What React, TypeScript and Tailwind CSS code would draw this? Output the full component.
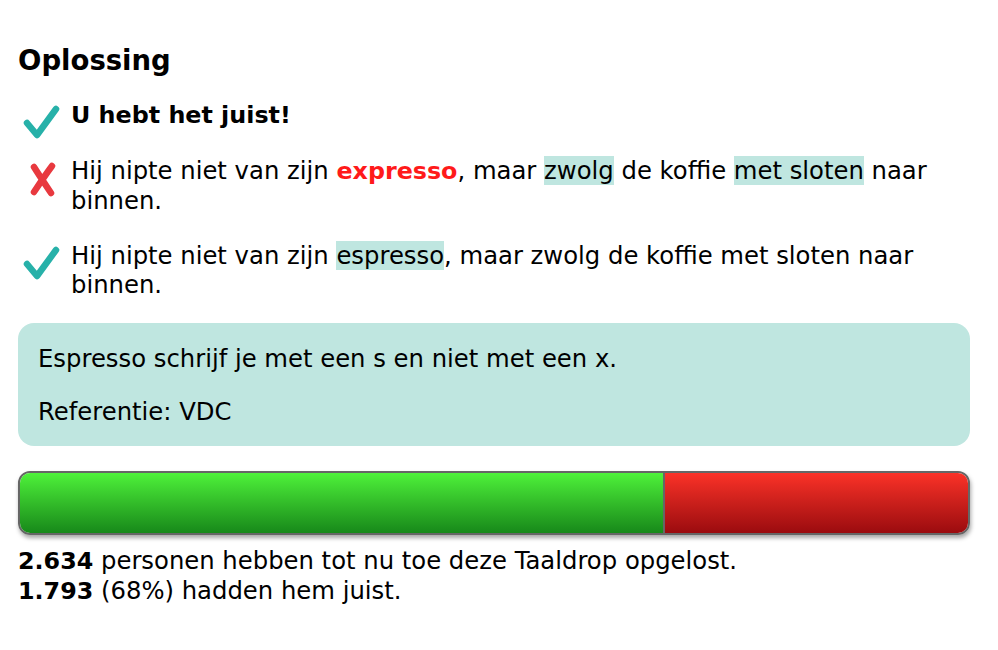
import React from "react";

function Check() {
  return (
    <svg width="40" height="36" viewBox="0 0 40 36" className="shrink-0">
      <path
        d="M5 19 L15 31 L34 5"
        fill="none"
        stroke="#27b1a9"
        strokeWidth="6.5"
        strokeLinecap="round"
        strokeLinejoin="round"
      />
    </svg>
  );
}

function Cross() {
  return (
    <svg width="40" height="36" viewBox="0 0 40 36" className="shrink-0">
      <path
        d="M12 5 C17 13 23 22 29 31 M30 4 C24 12 18 21 12 30"
        fill="none"
        stroke="#e8393f"
        strokeWidth="6.5"
        strokeLinecap="round"
      />
    </svg>
  );
}

const hl = "bg-[#bfe6e0]";

export default function App() {
  const total = "2.634";
  const correct = "1.793";
  const pct = 68;

  return (
    <div className="min-h-screen bg-white text-black font-['DejaVu_Sans',Verdana,sans-serif] px-[18px] pt-[42px] w-[988px]">
      <h1 className="text-[27.5px] font-bold leading-[36px] mb-[22px]">Oplossing</h1>

      <div className="flex items-start gap-[9px] pl-[4px]">
        <div className="h-[30px] pt-[3.5px]">
          <Check />
        </div>
        <p className="text-[23.8px] font-bold leading-[30px]">U hebt het juist!</p>
      </div>

      <div className="flex items-start gap-[9px] pl-[4px] mt-[25.5px]">
        <div className="h-[29px] pt-[6px]">
          <Cross />
        </div>
        <p className="text-[24.3px] leading-[29px]">
          Hij nipte niet van zijn{" "}
          <span className="font-bold text-[#ff1a1a] text-[23.8px]">expresso</span>, maar{" "}
          <span className={hl}>zwolg</span> de koffie{" "}
          <span className={hl}>met sloten</span> naar binnen.
        </p>
      </div>

      <div className="flex items-start gap-[9px] pl-[4px] mt-[26px]">
        <div className="h-[29px] pt-[4px]">
          <Check />
        </div>
        <p className="text-[24.3px] leading-[29px]">
          Hij nipte niet van zijn <span className={hl}>espresso</span>, maar zwolg de koffie
          met sloten naar binnen.
        </p>
      </div>

      <div className="mt-[24.5px] rounded-[16px] bg-[#bfe6e0] px-[20px] pt-[20.5px] pb-[20.5px] text-[24.3px] leading-[29px]">
        <p>Espresso schrijf je met een s en niet met een x.</p>
        <p className="mt-[24px]">Referentie: VDC</p>
      </div>

      <div className="mt-[25px] h-[64px] flex rounded-[12px] border-2 border-[#666] overflow-hidden shadow-[1px_3px_4px_rgba(0,0,0,0.35)]">
        <div
          className="h-full bg-gradient-to-b from-[#4ef23a] to-[#17891a] border-r-2 border-[#666]"
          style={{ width: `${pct}%` }}
        />
        <div className="h-full flex-1 bg-gradient-to-b from-[#fb3228] to-[#9b0b0f]" />
      </div>

      <div className="mt-[11px] text-[24.3px] leading-[29px]">
        <p>
          <b className="text-[23.8px]">{total}</b> personen hebben tot nu toe deze Taaldrop opgelost.
        </p>
        <p>
          <b className="text-[23.8px]">{correct}</b> ({pct}%) hadden hem juist.
        </p>
      </div>
    </div>
  );
}
